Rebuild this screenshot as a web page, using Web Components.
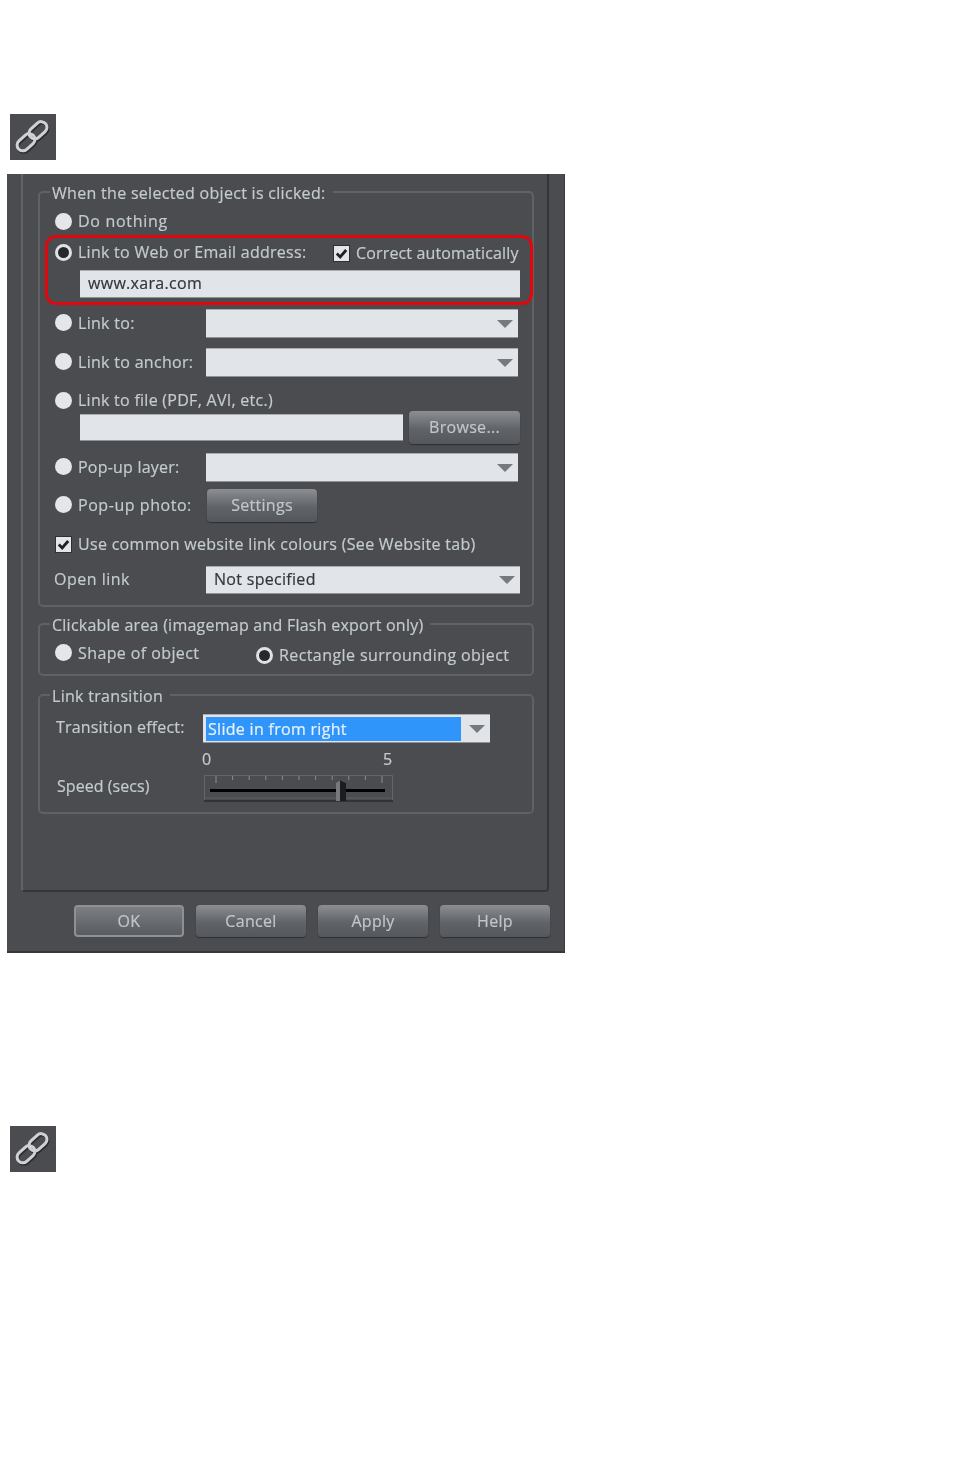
<!DOCTYPE html>
<html>
<head>
<meta charset="utf-8">
<title>Link dialog</title>
<style>
  html, body { margin: 0; background: #fff; }
  body {
    box-sizing: border-box; height: 1457px; overflow: hidden;
    padding: 114px 0 0 7px;
    font: 16px/18px "Open Sans", sans-serif; letter-spacing: .3px; color: #c3cbcf;
    -webkit-text-stroke: .2px;
  }
</style>
</head>
<body>
<x-link-icon></x-link-icon>
<x-dialog>
  <x-group>
    <span slot="title">When the selected object is clicked:</span>
    <x-row style="--t:9px;--h:24px;--l:15px"><x-radio style="letter-spacing:.7px">Do nothing</x-radio></x-row>
    <x-highlight>
      <x-row style="--t:4px;--h:22px;--l:7px;--c:278px">
        <x-radio checked style="letter-spacing:.27px">Link to Web or Email address:</x-radio>
        <x-check checked style="letter-spacing:.15px">Correct automatically</x-check>
      </x-row>
      <x-field style="margin:6px 0 0 32px;width:440px;height:28px">www.xara.com</x-field>
    </x-highlight>
    <x-row style="--t:4px;--h:29px;--l:15px;--c:151px"><x-radio>Link to:</x-radio><x-select style="width:312px"></x-select></x-row>
    <x-row style="--t:10px;--h:29px;--l:15px;--c:151px"><x-radio>Link to anchor:</x-radio><x-select style="width:312px"></x-select></x-row>
    <x-row style="--t:14px;--h:20px;--l:15px"><x-radio style="letter-spacing:.27px">Link to file (PDF, AVI, etc.)</x-radio></x-row>
    <x-row style="--h:33px;--l:40px;--c:329px">
      <x-field style="width:323px;height:27px"></x-field>
      <x-btn style="width:111px;height:33px">Browse...</x-btn>
    </x-row>
    <x-row style="--t:9px;--h:29px;--l:15px;--c:151px"><x-radio style="letter-spacing:.22px">Pop-up layer:</x-radio><x-select style="width:312px"></x-select></x-row>
    <x-row style="--t:7px;--h:33px;--l:15px;--c:152px"><x-radio style="letter-spacing:.55px">Pop-up photo:</x-radio><x-btn style="width:110px;height:33px">Settings</x-btn></x-row>
    <x-row style="--t:11px;--h:22px;--l:15px"><x-check checked>Use common website link colours (See Website tab)</x-check></x-row>
    <x-row style="--t:11px;--h:28px;--l:14px;--c:152px"><x-label style="letter-spacing:.5px">Open link</x-label><x-select style="width:314px">Not specified</x-select></x-row>
    <div style="height:11px"></div>
  </x-group>

  <x-group style="margin-top:8px">
    <span slot="title" style="letter-spacing:.24px">Clickable area (imagemap and Flash export only)</span>
    <x-row style="--t:8px;--h:22px;--l:15px;--c:201px">
      <x-radio style="letter-spacing:.4px">Shape of object</x-radio>
      <x-radio checked style="margin-top:5px;letter-spacing:.41px">Rectangle surrounding object</x-radio>
    </x-row>
    <div style="height:11px"></div>
  </x-group>

  <x-group style="margin-top:10px">
    <span slot="title">Link transition</span>
    <x-row style="--t:10px;--h:29px;--l:16px;--c:147px"><x-label style="padding-bottom:4px;letter-spacing:.18px">Transition effect:</x-label><x-select selected style="width:287px">Slide in from right</x-select></x-row>
    <x-row style="--t:7px;--h:18px;--l:162px;--c:181px"><x-label>0</x-label><x-label>5</x-label></x-row>
    <x-row style="--t:7px;--h:27px;--l:17px;--c:147px"><x-label style="padding-bottom:6px;letter-spacing:.05px">Speed (secs)</x-label><x-slider></x-slider></x-row>
    <div style="height:10px"></div>
  </x-group>

  <x-btn slot="footer" focused>OK</x-btn>
  <x-btn slot="footer" style="padding-bottom:0">Cancel</x-btn>
  <x-btn slot="footer" style="padding-bottom:0">Apply</x-btn>
  <x-btn slot="footer" style="padding-bottom:0">Help</x-btn>
</x-dialog>
<x-link-icon style="margin-top:173px"></x-link-icon>

<script>
// small helper, every element just stamps its markup in an open shadow root
class Base extends HTMLElement {
  connectedCallback() {
    this.attachShadow({ mode: 'open' });
    this.shadowRoot.innerHTML = this.markup();
  }
}

class LinkIcon extends Base {
  markup() {
    const links = `
      <rect x="6" y="22.5" width="20" height="11.5" rx="5.7" transform="rotate(-42 16 28.2)"/>
      <rect x="18" y="10.5" width="20" height="11.5" rx="5.7" transform="rotate(-42 28 16.2)"/>`;
    return `
      <style>
        :host { display: block; width: 46px; height: 46px; margin-left: 3px; background: #4a4c50; filter: blur(.6px); }
        svg { display: block; }
      </style>
      <svg width="46" height="46" viewBox="0 0 46 46" fill="none">
        <g stroke="#2b2d31" stroke-width="3.4" transform="translate(.9 1.3)">${links}</g>
        <g stroke="#cfd1d3" stroke-width="3">${links}</g>
      </svg>`;
  }
}

class Dialog extends Base {
  markup() {
    return `
      <style>
        :host {
          display: block; box-sizing: border-box; width: 558px; height: 779px; margin-top: 14px;
          padding-left: 14px; background: #4a4c50;
          border-right: 1px solid #3a3b3e; border-bottom: 2px solid #36373a;
          filter: blur(.6px);
        }
        .panel {
          box-sizing: border-box; width: 528px; height: 718px; padding: 9px 0 0 15px;
          border-left: 2px solid #626468; border-right: 2px solid #35363a;
          border-bottom: 2px solid #35363a; border-radius: 0 0 4px 4px;
        }
        .footer { display: flex; gap: 12px; margin: 13px 0 0 53px; }
      </style>
      <div class="panel"><slot></slot></div>
      <div class="footer"><slot name="footer"></slot></div>`;
  }
}

class Group extends Base {
  markup() {
    return `
      <style>
        :host { display: block; width: 496px; }
        fieldset { margin: 0; padding: 0; min-width: 0; border: 2px solid #5f6165; border-radius: 5px; }
        legend { box-sizing: border-box; margin-left: 10px; padding: 1px 7px 0 2px; height: 18px; line-height: 18px; }
      </style>
      <fieldset>
        <legend><slot name="title"></slot></legend>
        <slot></slot>
      </fieldset>`;
  }
}

class Row extends Base {
  markup() {
    return `
      <style>
        :host {
          display: grid; grid-template-columns: var(--c, auto) 1fr; align-items: center;
          margin-top: var(--t, 0); height: var(--h); padding-left: var(--l, 0);
        }
      </style>
      <slot></slot>`;
  }
}

class Label extends Base {
  markup() {
    return `
      <style>
        :host { display: block; padding-bottom: 2px; white-space: nowrap; }
      </style>
      <slot></slot>`;
  }
}

class Highlight extends Base {
  markup() {
    return `
      <style>
        :host {
          display: block; box-sizing: border-box; width: 488px; height: 70px; margin: 1px 0 0 5px;
          border: 3px solid #e2060f; border-radius: 11px;
        }
      </style>
      <slot></slot>`;
  }
}

class Radio extends Base {
  markup() {
    return `
      <style>
        :host { display: flex; align-items: center; gap: 6px; padding-bottom: 2px; white-space: nowrap; }
        i { flex: none; box-sizing: border-box; width: 17px; height: 17px; border-radius: 50%; background: #e4e6ea; }
        :host([checked]) i { background: #26282c; border: 3px solid #dfe1e5; }
      </style>
      <i></i><slot></slot>`;
  }
}

class Check extends Base {
  markup() {
    return `
      <style>
        :host { display: flex; align-items: center; gap: 6px; white-space: nowrap; }
        svg { flex: none; display: block; }
      </style>
      <svg width="17" height="17" viewBox="0 0 17 17">
        <rect x=".5" y=".5" width="16" height="16" fill="#e2e5ea" stroke="#2e3034"/>
        <path d="M3.8 8.6l3.4 3.4 6-7" fill="none" stroke="#1e2024" stroke-width="2.8"/>
      </svg>
      <slot></slot>`;
  }
}

class Field extends Base {
  markup() {
    return `
      <style>
        :host {
          display: flex; align-items: center; box-sizing: border-box; padding: 0 0 2px 8px;
          background: #e1e4e9; color: #34363a;
          border-top: 1px solid #a9abaf; border-bottom: 1px solid #8f9195;
        }
      </style>
      <slot></slot>`;
  }
}

class Select extends Base {
  markup() {
    return `
      <style>
        :host {
          display: flex; align-items: center; box-sizing: border-box; height: 100%; padding-left: 8px;
          background: #e1e4e9; color: #34363a;
          border-top: 1px solid #a9abaf; border-bottom: 1px solid #8f9195;
        }
        .text { flex: 1; padding-bottom: 2px; }
        svg { flex: none; margin-right: 5px; }
        :host([selected]) { padding: 0 0 0 3px; }
        :host([selected]) .text {
          align-self: stretch; display: flex; align-items: center; padding: 0 0 0 2px; margin: 2px 8px 1px 0;
          background: #2f95fb; color: #e6f1fc;
        }
      </style>
      <div class="text"><slot></slot></div>
      <svg width="16" height="8" viewBox="0 0 16 8"><path d="M0 0h16L8 8z" fill="#77797d"/></svg>`;
  }
}

class Btn extends Base {
  markup() {
    return `
      <style>
        :host {
          display: flex; align-items: center; justify-content: center; box-sizing: border-box;
          width: 110px; height: 32px; padding-bottom: 2px; border-radius: 4px; color: #c0c7cc;
          background: linear-gradient(#8b8e92, #606367 55%, #54575b);
          box-shadow: 0 1px 1px #2e2f33;
        }
        :host([focused]) { border: 2px solid #8d9094; padding-bottom: 0; box-shadow: none; background: linear-gradient(#7b7e82, #585b5f); }
      </style>
      <slot></slot>`;
  }
}

class Slider extends Base {
  markup() {
    // ticks are 16.6px apart
    let ticks = '';
    for (let i = 0; i < 11; i++) {
      const x = 12 + i * 16.6;
      ticks += `<path d="M${x} 1v${i % 10 ? 4 : 7}" stroke="#8a8c90"/>`;
    }
    return `
      <style>
        :host { display: block; width: 189px; height: 27px; }
        svg { display: block; }
      </style>
      <svg width="189" height="27" viewBox="0 0 189 27" fill="none">
        <path d="M.5 26V.5H188.5V26" stroke="#636569"/>
        <path d="M0 26h189" stroke="#323337" stroke-width="2"/>
        <path d="M2 23h185" stroke="#5a5c60"/>
        ${ticks}
        <path d="M6 15.5h175" stroke="#000" stroke-width="3"/>
        <path d="M132 8l5-3 5 3v18h-10z" fill="#77797d"/>
        <path d="M136 5l6 3v18h-6z" fill="#1b1c1f"/>
      </svg>`;
  }
}

customElements.define('x-link-icon', LinkIcon);
customElements.define('x-dialog', Dialog);
customElements.define('x-group', Group);
customElements.define('x-row', Row);
customElements.define('x-label', Label);
customElements.define('x-highlight', Highlight);
customElements.define('x-radio', Radio);
customElements.define('x-check', Check);
customElements.define('x-field', Field);
customElements.define('x-select', Select);
customElements.define('x-btn', Btn);
customElements.define('x-slider', Slider);
</script>
</body>
</html>
